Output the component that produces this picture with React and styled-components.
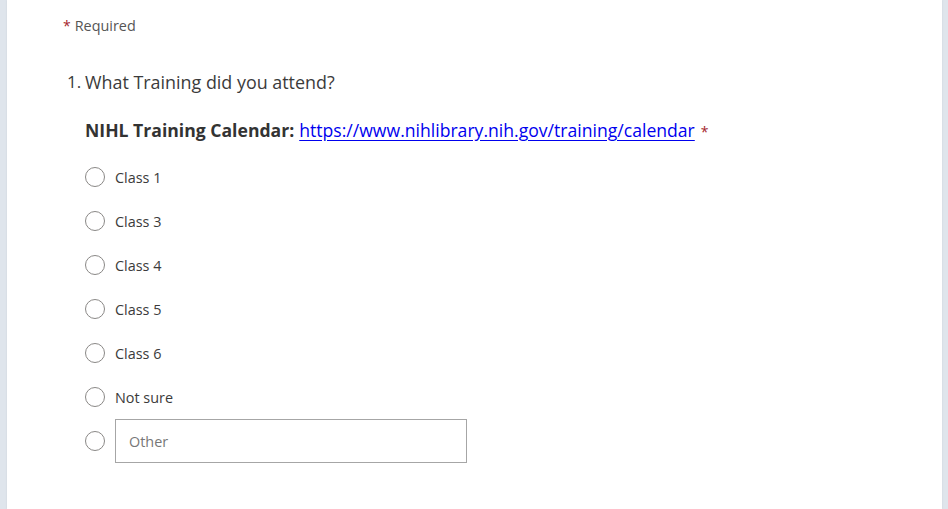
import React from 'react';
import styled, { createGlobalStyle } from 'styled-components';

const GlobalStyle = createGlobalStyle`
  html, body {
    margin: 0;
    padding: 0;
    background: #dfe5ec;
    font-family: "Open Sans", "Noto Sans", sans-serif;
  }
`;

const Page = styled.div`
  height: 509px;
  padding: 0 6px 0 7px;
  overflow: hidden;
`;

const Card = styled.div`
  height: 100%;
  background: #fff;
  box-shadow: 0 0 2px rgba(0, 0, 0, 0.08);
  padding: 16px 0 0 56px;
  box-sizing: border-box;
`;

const RequiredNote = styled.div`
  font-size: 14.4px;
  color: #555;
  display: flex;
  align-items: baseline;
  gap: 4px;
`;

const Star = styled.span`
  color: #a4262c;
  font-size: 14px;
  margin-left: ${(p) => p.$gap || 0}px;
`;

const Question = styled.div`
  margin-top: 35px;
  padding-left: 4px;
`;

const Title = styled.div`
  display: flex;
  font-size: 17.9px;
  color: #3b3b3b;
  line-height: 24px;
`;

const Num = styled.span`
  width: 18px;
  font-size: 17px;
`;

const Subtitle = styled.div`
  margin: 24px 0 0 18px;
  font-size: 17.6px;
  line-height: 24px;
  color: #333;

  b {
    font-weight: 700;
  }

  a {
    color: #0000ee;
    margin-left: 5px;
    text-underline-offset: 3px;
  }
`;

const Options = styled.div`
  margin: 11px 0 0 18px;
  display: flex;
  flex-direction: column;
`;

const Option = styled.label`
  display: flex;
  align-items: center;
  height: 44px;
  gap: 10px;
  font-size: 14.4px;
  color: #3b3b3b;
`;

const Radio = styled.span`
  width: 18px;
  height: 18px;
  border: 1px solid #8a8886;
  border-radius: 50%;
  flex-shrink: 0;
`;

const OtherInput = styled.div`
  width: 352px;
  height: 44px;
  box-sizing: border-box;
  border: 1px solid #a6a6a6;
  padding-left: 13px;
  display: flex;
  align-items: center;
  color: #777;
  font-size: 14.4px;
`;

const choices = ['Class 1', 'Class 3', 'Class 4', 'Class 5', 'Class 6', 'Not sure'];

export default function App() {
  return (
    <>
      <GlobalStyle />
      <Page>
        <Card>
          <RequiredNote>
            <Star>*</Star>
            Required
          </RequiredNote>
          <Question>
            <Title>
              <Num>1.</Num>
              What Training did you attend?
            </Title>
            <Subtitle>
              <b>NIHL Training Calendar:</b>
              <a href="#">https://www.nihlibrary.nih.gov/training/calendar</a>
              <Star $gap={6}>*</Star>
            </Subtitle>
            <Options>
              {choices.map((c) => (
                <Option key={c}>
                  <Radio />
                  {c}
                </Option>
              ))}
              <Option>
                <Radio />
                <OtherInput>Other</OtherInput>
              </Option>
            </Options>
          </Question>
        </Card>
      </Page>
    </>
  );
}
